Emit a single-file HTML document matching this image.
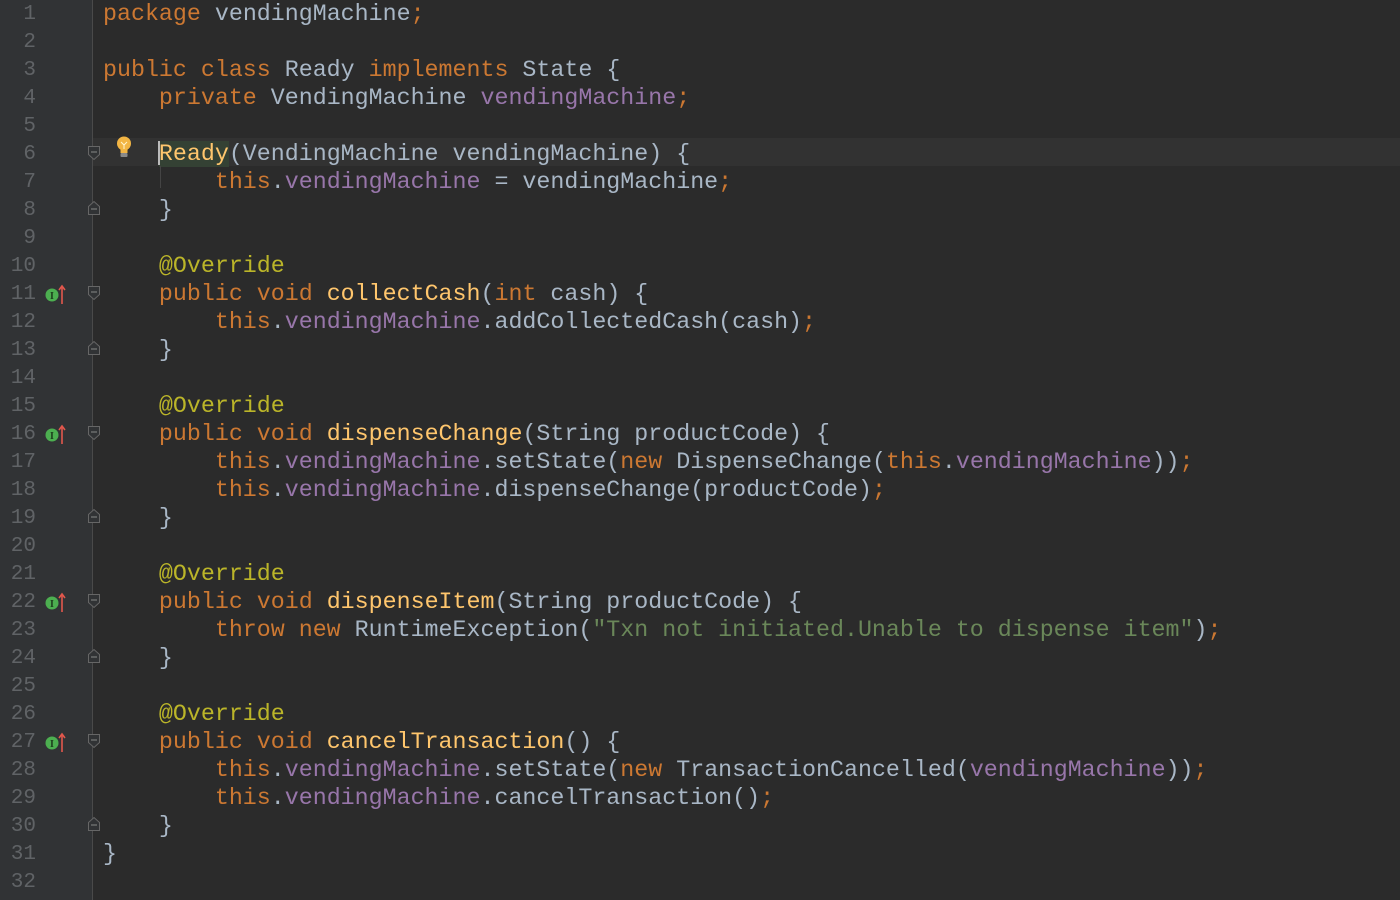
<!DOCTYPE html>
<html><head><meta charset="utf-8"><style>
html,body{margin:0;padding:0;width:1400px;height:900px;overflow:hidden;background:#2b2b2b}
#g{position:absolute;left:0;top:0;width:92px;height:900px;background:#313335;border-right:1px solid #4a4a4a}
.ln{position:absolute;left:0;width:36px;text-align:right;font:21px "Liberation Mono",monospace;color:#606366;height:28px;line-height:28px}
.l{position:absolute;left:103px;height:28px;line-height:28px;font:23.3px "Liberation Mono",monospace;color:#a9b7c6;white-space:pre}
.k{color:#cc7832}.f{color:#9876aa}.m{color:#ffc66d}.a{color:#bbb529}.s{color:#6a8759}
#cur{position:absolute;left:93px;right:0;top:138px;height:28px;background:#323232}
.fold{position:absolute;left:87px}
.ov{position:absolute;left:44px}
</style></head><body>
<div id="g"></div>
<div id="cur"></div>
<div id="c"></div>
<script>
const L=[
'<span class=k>package</span> vendingMachine<span class=k>;</span>',
'',
'<span class=k>public class</span> Ready <span class=k>implements</span> State {',
'    <span class=k>private</span> VendingMachine <span class=f>vendingMachine</span><span class=k>;</span>',
'',
'    <span class=m style="background:#344134">Ready</span>(VendingMachine vendingMachine) {',
'        <span class=k>this</span>.<span class=f>vendingMachine</span> = vendingMachine<span class=k>;</span>',
'    }',
'',
'    <span class=a>@Override</span>',
'    <span class=k>public void</span> <span class=m>collectCash</span>(<span class=k>int</span> cash) {',
'        <span class=k>this</span>.<span class=f>vendingMachine</span>.addCollectedCash(cash)<span class=k>;</span>',
'    }',
'',
'    <span class=a>@Override</span>',
'    <span class=k>public void</span> <span class=m>dispenseChange</span>(String productCode) {',
'        <span class=k>this</span>.<span class=f>vendingMachine</span>.setState(<span class=k>new</span> DispenseChange(<span class=k>this</span>.<span class=f>vendingMachine</span>))<span class=k>;</span>',
'        <span class=k>this</span>.<span class=f>vendingMachine</span>.dispenseChange(productCode)<span class=k>;</span>',
'    }',
'',
'    <span class=a>@Override</span>',
'    <span class=k>public void</span> <span class=m>dispenseItem</span>(String productCode) {',
'        <span class=k>throw new</span> RuntimeException(<span class=s>"Txn not initiated.Unable to dispense item"</span>)<span class=k>;</span>',
'    }',
'',
'    <span class=a>@Override</span>',
'    <span class=k>public void</span> <span class=m>cancelTransaction</span>() {',
'        <span class=k>this</span>.<span class=f>vendingMachine</span>.setState(<span class=k>new</span> TransactionCancelled(<span class=f>vendingMachine</span>))<span class=k>;</span>',
'        <span class=k>this</span>.<span class=f>vendingMachine</span>.cancelTransaction()<span class=k>;</span>',
'    }',
'}',
''];
let h='';
const ov=[11,16,22,27], fo=[6,11,16,22,27], fc=[8,13,19,24,30];
L.forEach((t,i)=>{const y=1+28*i;
h+=`<div class=ln style="top:${y}px">${i+1}</div><div class=l style="top:${y}px">${t}</div>`;});
ov.forEach(n=>{const y=-2+28*(n-1);
h+=`<svg class=ov style="top:${y+5}px" width="24" height="22"><circle cx="8" cy="12" r="6.5" fill="#4caf50"/><text x="8" y="16" font-size="10" font-family="Liberation Serif" font-weight="bold" text-anchor="middle" fill="#1b3b1b">I</text><path d="M18 21V4M15 7l3-4 3 4" stroke="#e2574c" stroke-width="1.6" fill="none"/></svg>`;});
fo.forEach(n=>{const y=-2+28*(n-1);
h+=`<svg class=fold style="top:${y+7}px" width="14" height="16"><path d="M1.5 1.5h11v8l-5.5 5-5.5-5z" fill="#313335" stroke="#666" /><path d="M4 7h6" stroke="#888"/></svg>`;});
fc.forEach(n=>{const y=-2+28*(n-1);
h+=`<svg class=fold style="top:${y+6}px" width="14" height="16"><path d="M1.5 14.5h11v-8l-5.5-5-5.5 5z" fill="#313335" stroke="#666" /><path d="M4 9h6" stroke="#888"/></svg>`;});
h+=`<svg style="position:absolute;left:115px;top:135px" width="20" height="26"><circle cx="9" cy="8.5" r="7" fill="#f2b544"/><rect x="5.5" y="13" width="7" height="5" fill="#f2b544"/><rect x="5.5" y="18" width="7" height="4" rx="1" fill="#8a8a8a"/><path d="M6 7l3 3 3-3M9 10v4" stroke="#fff5d0" stroke-width="1" fill="none"/></svg>`;
h+=`<div style="position:absolute;left:158px;top:141px;width:2px;height:24px;background:#bbb"></div>`;
h+=`<div style="position:absolute;left:160px;top:166px;width:1px;height:22px;background:#444"></div>`;
document.getElementById('c').innerHTML=h;
</script>
</body></html>
